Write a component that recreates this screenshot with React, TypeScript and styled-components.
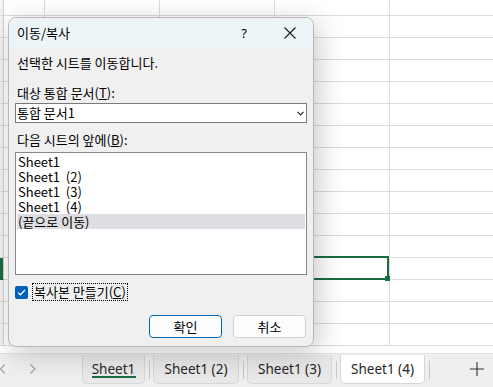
import React from 'react';
import styled, { createGlobalStyle } from 'styled-components';

const GlobalStyle = createGlobalStyle`
  html, body { margin: 0; padding: 0; }
  body {
    width: 493px; height: 387px; overflow: hidden; background: #fff;
    font-family: "Segoe UI", "Noto Sans", "Noto Sans CJK KR", sans-serif;
  }
`;

const KR = `"Noto Sans CJK KR", "Noto Sans", sans-serif`;

const Window = styled.div`
  position: relative;
  width: 493px;
  height: 387px;
  display: flex;
  flex-direction: column;
  overflow: hidden;
  background: #fff;
`;

const Sheet = styled.div`
  flex: 1;
  min-height: 0;
  display: grid;
  grid-template-columns: 4px 41px repeat(4, 115px);
  grid-template-rows: 16px;
  grid-auto-rows: 22px;
  align-content: start;
  overflow: hidden;
`;

const RowHead = styled.div<{ $sel?: boolean }>`
  box-sizing: border-box;
  background: ${p => (p.$sel ? '#1d6b40' : '#f4f4f4')};
  border-right: 1px solid #d0d0d0;
  border-bottom: 1px solid ${p => (p.$sel ? '#1d6b40' : '#dcdcdc')};
`;

const Cell = styled.div<{ $sel?: boolean }>`
  box-sizing: border-box;
  position: relative;
  border-right: 1px solid #dcdcdc;
  border-bottom: 1px solid #dcdcdc;
  ${p =>
    p.$sel &&
    `
    &::after {
      content: '';
      position: absolute;
      top: -2px; left: -2px; right: 0; bottom: -1px;
      border: 2px solid #1d6b40;
    }
    &::before {
      content: '';
      position: absolute;
      right: -1px; bottom: -2px;
      width: 5px; height: 5px;
      background: #1d6b40;
      z-index: 1;
    }
  `}
`;

const TabBar = styled.div`
  height: 34px;
  flex: none;
  display: flex;
  align-items: flex-start;
  background: #efefef;
  border-top: 1px solid #e2e2e2;
  box-sizing: border-box;
`;

const NavArrow = styled.div<{ $w: number }>`
  width: ${p => p.$w}px;
  height: 30px;
  display: flex;
  align-items: center;
  justify-content: flex-end;
  color: #9a9a9a;
  flex: none;
`;

const NavGap = styled.div`
  width: 46px;
  flex: none;
`;

const Tab = styled.div<{ $active?: boolean; $hover?: boolean; $w: number }>`
  box-sizing: border-box;
  width: ${p => p.$w}px;
  height: 29px;
  margin-top: 1px;
  flex: none;
  display: flex;
  align-items: center;
  justify-content: center;
  position: relative;
  font-size: 13.5px;
  color: #262626;
  background: ${p => (p.$hover ? '#ffffff' : '#e8e8e8')};
  border: 1px solid #d6d6d6;
  border-top: none;
  border-radius: 0 0 5px 5px;
  ${p =>
    p.$active &&
    `
    &::after {
      content: '';
      position: absolute;
      left: 9px; right: 8px; bottom: 5px;
      height: 2px;
      background: #1d6b40;
    }
  `}
`;

const TabSep = styled.div`
  width: 8px;
  flex: none;
  display: flex;
  justify-content: center;
  padding-top: 7px;
  &::before {
    content: '';
    width: 1px;
    height: 18px;
    background: #c8c8c8;
  }
`;

const AddTab = styled.div`
  flex: 1;
  display: flex;
  justify-content: flex-end;
  align-items: center;
  height: 30px;
  padding-right: 9px;
`;

/* ---- dialog ---- */
const Dialog = styled.div`
  position: absolute;
  left: 8px;
  top: 17px;
  width: 306px;
  height: 330px;
  box-sizing: border-box;
  background: #f0f0f0;
  border: 1px solid #b9b9b9;
  border-radius: 8px;
  overflow: hidden;
  display: flex;
  flex-direction: column;
  box-shadow: 4px 6px 28px rgba(0, 0, 0, 0.22);
  font-family: ${KR};
  font-size: 13px;
  color: #000;
`;

const TitleBar = styled.div`
  height: 30px;
  flex: none;
  background: #edf4f7;
  display: flex;
  align-items: center;
  padding-left: 8px;
`;

const Title = styled.div`
  flex: 1;
  line-height: 16px;
`;

const TitleBtn = styled.div`
  width: 46px;
  height: 30px;
  display: flex;
  align-items: center;
  justify-content: center;
  font-family: "Segoe UI", "Noto Sans", sans-serif;
  font-size: 13px;
`;

const Body = styled.div`
  flex: 1;
  display: flex;
  flex-direction: column;
  padding: 0 6px 0 6px;
`;

const Text = styled.div<{ $mt: number }>`
  margin-top: ${p => p.$mt}px;
  height: 16px;
  line-height: 16px;
  padding-left: 2px;
  white-space: nowrap;
`;

const Key = styled.span`
  text-decoration: underline;
  text-underline-offset: 1px;
`;

const Select = styled.div`
  margin-top: 2px;
  height: 20px;
  box-sizing: border-box;
  background: #fff;
  border: 1px solid #7a7a7a;
  display: flex;
  align-items: center;
  padding-left: 1px;
  padding-right: 2px;
`;

const SelectValue = styled.div`
  flex: 1;
  line-height: 16px;
`;

const ListBox = styled.div`
  margin-top: 4px;
  height: 123px;
  box-sizing: border-box;
  background: #fff;
  border: 1px solid #828790;
  padding: 1px;
  display: flex;
  flex-direction: column;
`;

const ListItem = styled.div<{ $sel?: boolean }>`
  height: 15px;
  line-height: 15px;
  padding-left: 1px;
  background: ${p => (p.$sel ? '#dedee2' : 'transparent')};
  white-space: pre;
`;

const CheckRow = styled.div`
  margin-top: 8px;
  display: flex;
  align-items: center;
  gap: 4px;
`;

const CheckBox = styled.div`
  width: 13px;
  height: 13px;
  box-sizing: border-box;
  border-radius: 2px;
  background: #005fb8;
  display: flex;
  align-items: center;
  justify-content: center;
`;

const FocusLabel = styled.div`
  border: 1px dotted #000;
  height: 18px;
  box-sizing: border-box;
  line-height: 16px;
  padding: 0 1px;
`;

const Buttons = styled.div`
  margin-top: 14px;
  display: flex;
  justify-content: flex-end;
  gap: 11px;
  padding-right: 1px;
`;

const Button = styled.div<{ $default?: boolean }>`
  width: 73px;
  height: 23px;
  box-sizing: border-box;
  background: #fdfdfd;
  border: 1px solid ${p => (p.$default ? '#0067c0' : '#d1d1d1')};
  border-radius: 4px;
  display: flex;
  align-items: center;
  justify-content: center;
  line-height: 16px;
`;

const ROWS = 16;
const COLS = 5;
const SEL_ROW = 12;
const SEL_COL = 4;

export default function App() {
  const rows = [];
  for (let r = 0; r < ROWS; r++) {
    rows.push(<RowHead key={`h${r}`} $sel={r === SEL_ROW} />);
    for (let c = 1; c <= COLS; c++) {
      rows.push(<Cell key={`${r}-${c}`} $sel={r === SEL_ROW && c === SEL_COL} />);
    }
  }
  return (
    <Window>
      <GlobalStyle />
      <Sheet>{rows}</Sheet>
      <TabBar>
        <NavArrow $w={5}>
          <svg width="5" height="10" viewBox="0 0 5 10"><path d="M5 0.5 L0.5 5 L5 9.5" fill="none" stroke="#a0a0a0" strokeWidth="1.2" /></svg>
        </NavArrow>
        <NavArrow $w={31}>
          <svg width="6" height="10" viewBox="0 0 6 10"><path d="M0.5 0.5 L5 5 L0.5 9.5" fill="none" stroke="#a0a0a0" strokeWidth="1.2" /></svg>
        </NavArrow>
        <NavGap />
        <Tab $w={63} $active>Sheet1</Tab>
        <TabSep />
        <Tab $w={86}>Sheet1 (2)</Tab>
        <TabSep />
        <Tab $w={85}>Sheet1 (3)</Tab>
        <TabSep />
        <Tab $w={85} $hover>Sheet1 (4)</Tab>
        <TabSep />
        <AddTab>
          <svg width="14" height="14" viewBox="0 0 14 14"><path d="M7 0 V14 M0 7 H14" stroke="#333" strokeWidth="1.1" /></svg>
        </AddTab>
      </TabBar>

      <Dialog>
        <TitleBar>
          <Title>이동/복사</Title>
          <TitleBtn>?</TitleBtn>
          <TitleBtn>
            <svg width="12" height="12" viewBox="0 0 12 12"><path d="M0.5 0.5 L11.5 11.5 M11.5 0.5 L0.5 11.5" stroke="#1a1a1a" strokeWidth="1.1" /></svg>
          </TitleBtn>
        </TitleBar>
        <Body>
          <Text $mt={7}>선택한 시트를 이동합니다.</Text>
          <Text $mt={14}>대상 통합 문서(<Key>T</Key>):</Text>
          <Select>
            <SelectValue>통합 문서1</SelectValue>
            <svg width="7" height="5" viewBox="0 0 7 5"><path d="M0.5 0.8 L3.5 3.8 L6.5 0.8" fill="none" stroke="#222" strokeWidth="1.2" /></svg>
          </Select>
          <Text $mt={9}>다음 시트의 앞에(<Key>B</Key>):</Text>
          <ListBox>
            <ListItem>Sheet1</ListItem>
            <ListItem>Sheet1  (2)</ListItem>
            <ListItem>Sheet1  (3)</ListItem>
            <ListItem>Sheet1  (4)</ListItem>
            <ListItem $sel>(끝으로 이동)</ListItem>
          </ListBox>
          <CheckRow>
            <CheckBox>
              <svg width="9" height="7" viewBox="0 0 9 7"><path d="M1 3.6 L3.3 5.8 L8 1" fill="none" stroke="#fff" strokeWidth="1.3" /></svg>
            </CheckBox>
            <FocusLabel>복사본 만들기(<Key>C</Key>)</FocusLabel>
          </CheckRow>
          <Buttons>
            <Button $default>확인</Button>
            <Button>취소</Button>
          </Buttons>
        </Body>
      </Dialog>
    </Window>
  );
}
